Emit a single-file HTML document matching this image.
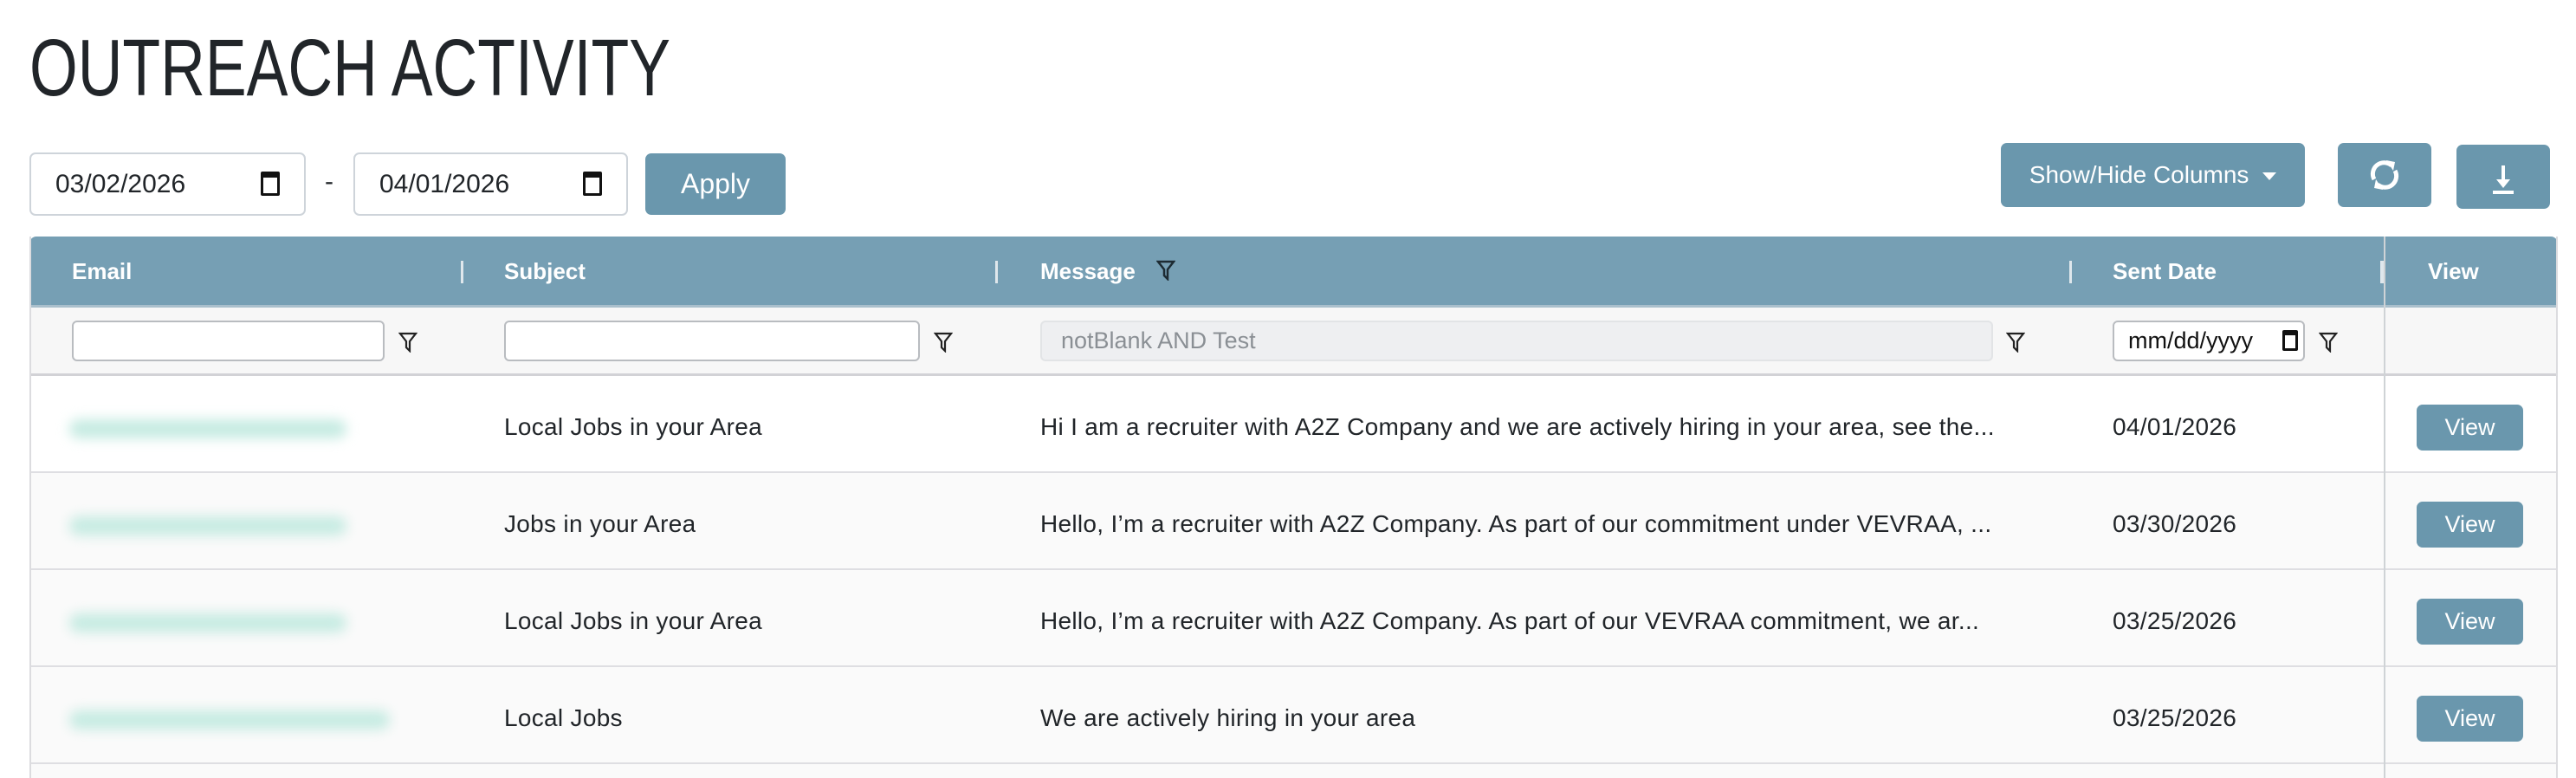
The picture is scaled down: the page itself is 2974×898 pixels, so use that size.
<!DOCTYPE html>
<html style="overflow:hidden;height:898px"><head><meta charset="utf-8"><style>
*{box-sizing:border-box;margin:0;padding:0}
body{width:2974px;height:898px;overflow:hidden;background:#fff;font-family:"Liberation Sans",sans-serif;color:#212529;position:relative}
.a{position:absolute}
.title{left:34px;top:28px;font-size:93px;line-height:100px;transform:scaleX(.77);transform-origin:left top;color:#212529;white-space:nowrap}
.date{border:2px solid #ced4da;border-radius:7px;height:73px;font-size:30px;padding:0 0 0 28px;line-height:69px;background:#fff}
.cal{position:absolute;right:28px;top:20px;width:22px;height:28px;border:3px solid #111;border-top-width:7px;border-radius:2px}
.btn{background:#6a97ad;color:#fff;border-radius:7px;text-align:center}
.hdr{left:34px;top:273px;width:2919px;height:82px;background:#769fb4;border-radius:8px 8px 0 0;border-bottom:3px solid #a9bfcc}
.h{color:#fff;font-weight:bold;font-size:26px;top:298px}
.sep{width:3px;height:26px;background:#dfe7ec;top:301px}
.frow{left:34px;top:355px;width:2919px;height:79px;background:#f7f7f7;border-bottom:3px solid #d2d2d6}
.inp{height:47px;top:370px;border:2px solid #b9bcc0;border-radius:6px;background:#fff}
.fun{top:383px;width:22px;height:24px}
.row{left:34px;width:2919px;height:112px;border-bottom:2px solid #dedee2}
.t{font-size:28px;white-space:nowrap;overflow:hidden;text-overflow:ellipsis;letter-spacing:0.3px}
.blur{height:22px;border-radius:11px;background:#c6ebe2;filter:blur(7px)}
.vb{left:2790px;width:123px;height:53px;line-height:53px;font-size:27px}
</style></head><body>
<div class="a title">OUTREACH ACTIVITY</div>

<div class="a date" style="left:34px;top:176px;width:319px">03/02/2026<span class="cal"></span></div>
<div class="a" style="left:375px;top:193px;font-size:30px">-</div>
<div class="a date" style="left:408px;top:176px;width:317px">04/01/2026<span class="cal"></span></div>
<div class="a btn" style="left:745px;top:177px;width:162px;height:71px;line-height:71px;font-size:32px">Apply</div>

<div class="a btn" style="left:2310px;top:165px;width:351px;height:74px;line-height:74px;font-size:28px">Show/Hide Columns <span style="display:inline-block;border:8px solid transparent;border-top:9px solid #fff;border-bottom:0;vertical-align:middle;margin-left:8px"></span></div>
<div class="a btn" style="left:2699px;top:165px;width:108px;height:74px">
<svg width="108" height="74" viewBox="0 0 108 74"><g fill="none" stroke="#fff" stroke-width="5"><path d="M42 42a13 13 0 0 1 20-16"/><path d="M66 32a13 13 0 0 1-20 16"/></g><path d="M56 20l10 2-2 10z" fill="#fff"/><path d="M52 54l-10-2 2-10z" fill="#fff"/></svg></div>
<div class="a btn" style="left:2836px;top:167px;width:108px;height:74px">
<svg width="108" height="74" viewBox="0 0 108 74"><path d="M54 24v22" stroke="#fff" stroke-width="4"/><path d="M46 40l8 10 8-10z" fill="#fff"/><path d="M42 55h24" stroke="#fff" stroke-width="4"/></svg></div>

<div class="a hdr"></div>
<div class="a h" style="left:83px">Email</div>
<div class="a sep" style="left:532px"></div>
<div class="a h" style="left:582px">Subject</div>
<div class="a sep" style="left:1149px"></div>
<div class="a h" style="left:1201px">Message</div>
<svg class="a" style="left:1335px;top:300px" width="22" height="24" viewBox="0 0 22 24"><path d="M2 2h18l-7 9v11l-4-4v-7z" fill="none" stroke="#1d2b33" stroke-width="2.5"/></svg>
<div class="a sep" style="left:2389px"></div>
<div class="a h" style="left:2439px">Sent Date</div>
<div class="a sep" style="left:2748px;width:6px"></div>
<div class="a" style="left:2752px;top:273px;width:2px;height:625px;background:#cfd3d6"></div>
<div class="a h" style="left:2803px">View</div>

<div class="a frow"></div>
<div class="a inp" style="left:83px;width:361px"></div>
<div class="a inp" style="left:582px;width:480px"></div>
<div class="a inp" style="left:1201px;width:1100px;background:#eeeff1;border-color:#e2e4e6;font-size:27px;color:#8a8f94;line-height:43px;padding-left:22px">notBlank AND Test</div>
<div class="a inp" style="left:2439px;width:222px;font-size:27px;line-height:43px;padding-left:16px;color:#111">mm/dd/yyyy<span style="position:absolute;right:6px;top:9px;width:18px;height:24px;border:3px solid #111;border-top-width:6px;border-radius:2px"></span></div>
<svg class="a fun" style="left:460px" viewBox="0 0 22 24"><path d="M2 2h18l-7 9v11l-4-4v-7z" fill="none" stroke="#222" stroke-width="2.2"/></svg>
<svg class="a fun" style="left:1078px" viewBox="0 0 22 24"><path d="M2 2h18l-7 9v11l-4-4v-7z" fill="none" stroke="#222" stroke-width="2.2"/></svg>
<svg class="a fun" style="left:2316px" viewBox="0 0 22 24"><path d="M2 2h18l-7 9v11l-4-4v-7z" fill="none" stroke="#222" stroke-width="2.2"/></svg>
<svg class="a fun" style="left:2677px" viewBox="0 0 22 24"><path d="M2 2h18l-7 9v11l-4-4v-7z" fill="none" stroke="#222" stroke-width="2.2"/></svg>

<div class="a row" style="top:434px;background:#fff"></div>
<div class="a row" style="top:546px;background:#fafafa"></div>
<div class="a row" style="top:658px;background:#fafafa"></div>
<div class="a row" style="top:770px;background:#fafafa"></div>
<div class="a" style="left:34px;top:882px;width:2919px;height:16px;background:#fafafa"></div>
<div class="a" style="left:34px;top:273px;width:2px;height:625px;background:#dcdcdf"></div>
<div class="a" style="left:2951px;top:273px;width:2px;height:625px;background:#dcdcdf"></div>
<div class="a" style="left:2752px;top:355px;width:2px;height:543px;background:#cfd3d6"></div>

<div class="a blur" style="left:80px;top:484px;width:320px"></div>
<div class="a blur" style="left:80px;top:596px;width:320px"></div>
<div class="a blur" style="left:80px;top:708px;width:320px"></div>
<div class="a blur" style="left:80px;top:820px;width:370px"></div>

<div class="a t" style="left:582px;top:477px">Local Jobs in your Area</div>
<div class="a t" style="left:1201px;top:477px;width:1145px">Hi I am a recruiter with A2Z Company and we are actively hiring in your area, see the...</div>
<div class="a t" style="left:2439px;top:477px">04/01/2026</div>
<div class="a btn vb" style="top:467px">View</div>

<div class="a t" style="left:582px;top:589px">Jobs in your Area</div>
<div class="a t" style="left:1201px;top:589px;width:1145px">Hello, I’m a recruiter with A2Z Company. As part of our commitment under VEVRAA, ...</div>
<div class="a t" style="left:2439px;top:589px">03/30/2026</div>
<div class="a btn vb" style="top:579px">View</div>

<div class="a t" style="left:582px;top:701px">Local Jobs in your Area</div>
<div class="a t" style="left:1201px;top:701px;width:1145px">Hello, I’m a recruiter with A2Z Company. As part of our VEVRAA commitment, we ar...</div>
<div class="a t" style="left:2439px;top:701px">03/25/2026</div>
<div class="a btn vb" style="top:691px">View</div>

<div class="a t" style="left:582px;top:813px">Local Jobs</div>
<div class="a t" style="left:1201px;top:813px;width:1145px">We are actively hiring in your area</div>
<div class="a t" style="left:2439px;top:813px">03/25/2026</div>
<div class="a btn vb" style="top:803px">View</div>
</body></html>
